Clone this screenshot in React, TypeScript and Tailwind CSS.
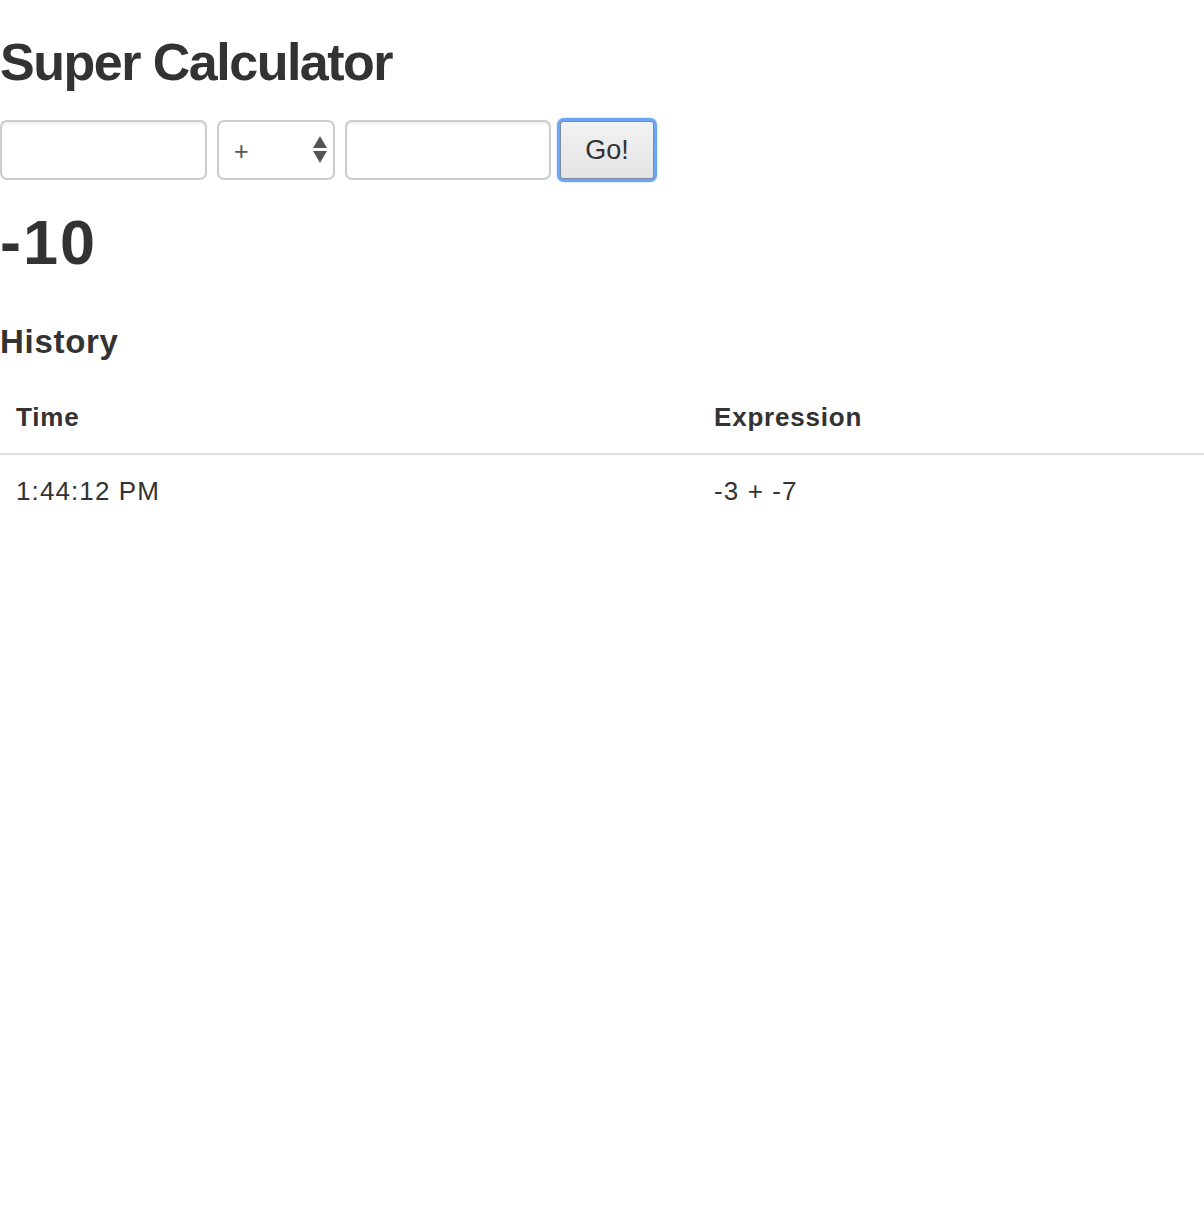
import { useState } from 'react'

const history = [{ time: '1:44:12 PM', expr: '-3 + -7' }]

export default function App() {
  const [op, setOp] = useState('+')

  return (
    <div className="min-h-screen bg-white text-[#333] font-['Liberation_Sans',Arial,sans-serif]">
      <h2 className="mt-[34px] text-[52px] leading-[57px] font-bold tracking-[-1.5px]">Super Calculator</h2>

      <div className="mt-[29px] flex items-center h-[60px]">
        <input
          className="w-[207px] h-[60px] rounded-[7px] border-2 border-[#ccc] bg-white shadow-[inset_0_2px_2px_rgba(0,0,0,0.06)] outline-none"
        />
        <div className="relative ml-[10px] w-[118px] h-[60px]">
          <select
            value={op}
            onChange={(e) => setOp(e.target.value)}
            className="appearance-none w-full h-full rounded-[7px] border-2 border-[#ccc] bg-white pl-[15px] pt-[3px] text-[25px] text-[#555] outline-none"
          >
            <option>+</option>
            <option>-</option>
            <option>*</option>
            <option>/</option>
          </select>
          <svg className="pointer-events-none absolute left-[96px] top-[16px]" width="14" height="28" viewBox="0 0 14 28">
            <path d="M7 0 L14 12 L0 12 Z" fill="#555" />
            <path d="M0 15 L14 15 L7 27 Z" fill="#555" />
          </svg>
        </div>
        <input
          className="ml-[10px] w-[206px] h-[60px] rounded-[7px] border-2 border-[#ccc] bg-white shadow-[inset_0_2px_2px_rgba(0,0,0,0.06)] outline-none"
        />
        <div className="ml-[6px] rounded-[7px] bg-[#6ea4f5] p-[3px] shadow-[0_0_2px_#9fc3fa]">
          <button className="block w-[94px] h-[58px] rounded-[3px] border border-[#7d8ba3] bg-gradient-to-b from-[#f2f2f2] to-[#e4e4e4] text-[27px] text-[#333]">
            Go!
          </button>
        </div>
      </div>

      <h1 className="mt-[28px] text-[63px] leading-[69px] font-bold tracking-[2px]">-10</h1>

      <h4 className="mt-[47px] text-[33px] leading-[35px] font-bold tracking-[0.7px]">History</h4>

      <table className="mt-[26px] w-full border-collapse text-[26px]">
        <thead>
          <tr className="border-b-2 border-[#ddd]">
            <th className="w-[698px] px-[16px] pt-[14px] pb-[18px] text-left font-bold leading-[36px] tracking-[0.8px]">Time</th>
            <th className="px-[16px] pt-[14px] pb-[18px] text-left font-bold leading-[36px] tracking-[0.8px]">Expression</th>
          </tr>
        </thead>
        <tbody>
          {history.map((h) => (
            <tr key={h.time}>
              <td className="px-[16px] py-[18px] leading-[36px] tracking-[1.1px]">{h.time}</td>
              <td className="px-[16px] py-[18px] leading-[36px] tracking-[1.1px]">{h.expr}</td>
            </tr>
          ))}
        </tbody>
      </table>
    </div>
  )
}
